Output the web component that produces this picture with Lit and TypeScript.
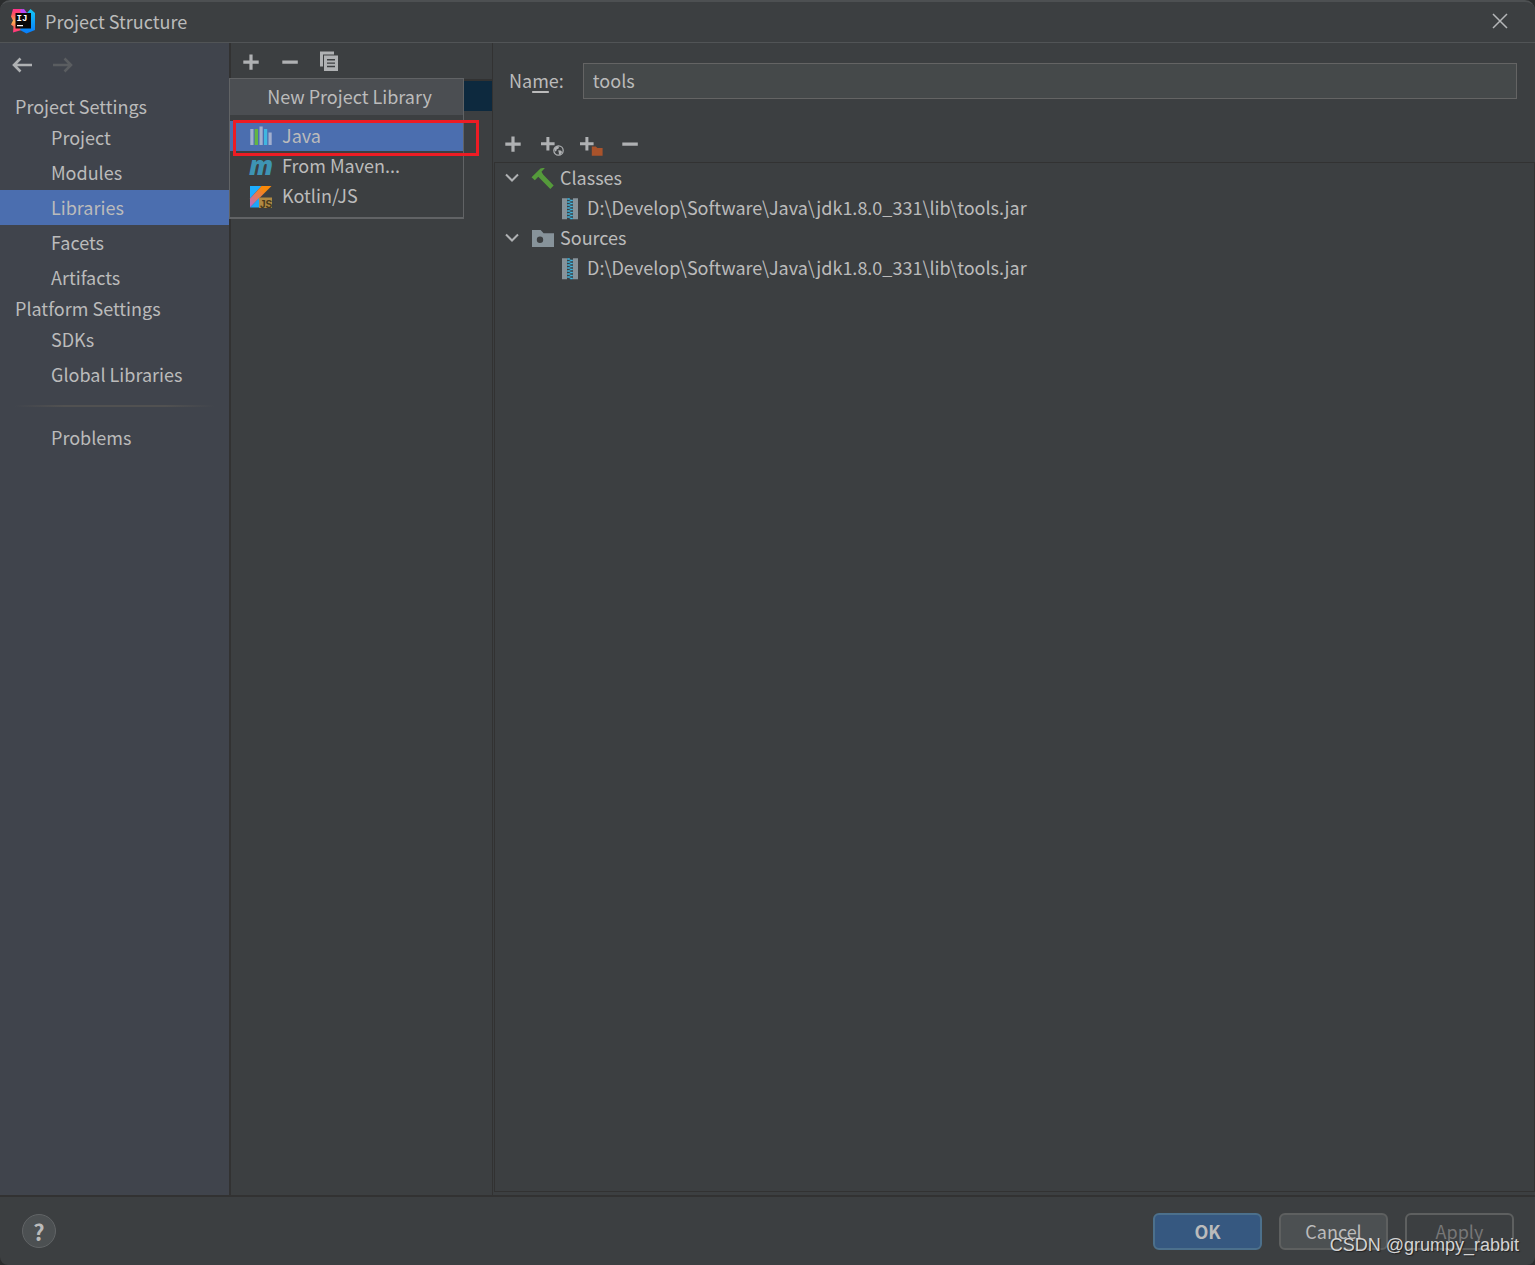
import { LitElement, html, css, svg } from "lit";
import { customElement, state } from "lit/decorators.js";
import { classMap } from "lit/directives/class-map.js";

const icon = (size: number, body: unknown) =>
  html`<svg class="icon" width=${size} height=${size} viewBox="0 0 ${size} ${size}" aria-hidden="true">${body}</svg>`;

const smallPlus = svg`<path d="M1 10.300h5.400V5h3v5.300h5.200v3H9.400v5.300h-3v-5.300H1z" fill="#afb1b3"/>`;

const icons = {
  add: icon(24, svg`<path d="M4.300 10.500h6.100V4.400h3.200v6.100h6.100v3.200h-6.100v6.100h-3.200v-6.100H4.300z" fill="#afb1b3"/>`),
  remove: icon(24, svg`<path d="M4.300 10.500h15.500v3.200H4.300z" fill="#afb1b3"/>`),
  copy: icon(24, svg`<path d="M3 1.500h14v3H6v12H3z" fill="#afb1b3"/>
    <path fill-rule="evenodd" d="M7 5.500h14v15.500H7zM10 9v1.400h8V9zM10 12.400v1.400h8v-1.400zM10 15.800v1.400h8v-1.400z" fill="#afb1b3"/>`),
  addWeb: icon(24, svg`${smallPlus}
    <circle cx="18.500" cy="18.500" r="4.700" fill="none" stroke="#afb1b3" stroke-width="1.200"/>
    <path d="M14 16.500l3-2.600 2 .8-.4 1.800-2 1-.2 1.600-1.400.4zM18.200 18.200l2.600.3 1.400 1.500-1.700 2.300-1.500.4-.2-2z" fill="#afb1b3"/>`),
  addFolder: icon(24, svg`${smallPlus}
    <path d="M12.800 14.500h4l1.600 1.600h5.200v7.600H12.800z" fill="#a9532b"/>`),
  back: icon(24, svg`<path d="M22 12H4M10.500 5.500L4 12l6.500 6.500" fill="none" stroke="#afb1b3" stroke-width="2.600"/>`),
  forward: icon(24, svg`<path d="M3 12h18M14.500 5.500L21 12l-6.500 6.500" fill="none" stroke="#5a5d60" stroke-width="2.600"/>`),
  close: icon(16, svg`<path d="M1 1l14 14M15 1L1 15" fill="none" stroke="#b4b6b8" stroke-width="1.500"/>`),
  chevron: icon(16, svg`<path d="M2 4.500l6 6 6-6" fill="none" stroke="#afb1b3" stroke-width="2"/>`),
  hammer: icon(24, svg`<path d="M.5 11.200L8.700 3.200c1-1 2-1.200 5.200-1.200L10.500 5.800l1.600 2.600L22.700 19.600l-3.400 3.400L8.500 12 7.300 10.800 3.800 14.300z" fill="#559a3b"/>`),
  folder: icon(24, svg`<path fill-rule="evenodd" d="M1 4h8.600l3 3.200H23v13.800H1zM9 10.500a3.200 3.200 0 1 0 0 6.400A3.200 3.200 0 0 0 9 10.500z" fill="#87939a"/>`),
  archive: icon(24, svg`<path d="M4 2.200h5v21H4zM15 2.200h5v21h-5z" fill="#87939a"/>
    <path d="M10.500 2.200v21M13.500 3.700v19.500" fill="none" stroke="#40b6e0" stroke-width="2.600" stroke-dasharray="1.500 1.500"/>
    <path d="M12 3v20" fill="none" stroke="#40b6e0" stroke-width="1.200" stroke-opacity=".4"/>`),
  library: icon(24, svg`<path d="M1.300 4h3.200v16H1.300zM10.500 1.500h3.200V20h-3.200zM19.500 7.500h3.200V20h-3.200z" fill="#a2afce"/>
    <path d="M5.700 4h3.300v16H5.700z" fill="#62b543"/><path d="M15 4h3.200v16H15z" fill="#40b6e0"/>`),
  maven: icon(24, svg`<text x="0" y="20" font-family="Open Sans, sans-serif" font-size="26" font-weight="800" font-style="italic" fill="#3e94b3">m</text>`),
  kotlin: icon(24, svg`<defs>
      <linearGradient id="ko" x1="0" y1="1" x2="1" y2="0"><stop offset="0" stop-color="#b26bd8"/><stop offset=".45" stop-color="#e57a55"/><stop offset=".75" stop-color="#f98909"/></linearGradient>
    </defs>
    <path d="M1 1h11.500L1 13.500z" fill="#1eaeff"/><path d="M12.500 1H22.500L1 22.500V13.500z" fill="url(#ko)"/>
    <path d="M1 22.500L10.500 12.500V22.500z" fill="#1ea5fa"/>
    <path d="M10 12.500h13v10.500H10z" fill="#b08a43"/>
    <text x="11" y="22.500" font-family="Liberation Sans, sans-serif" font-size="10" font-weight="700" fill="#46381c">JS</text>`),
  logo: icon(26, svg`<defs>
      <linearGradient id="lw" x1="0" y1="0" x2="0" y2="1"><stop offset="0" stop-color="#ff318c"/><stop offset=".25" stop-color="#ff5a5a"/><stop offset=".55" stop-color="#fdb052"/><stop offset=".8" stop-color="#ff5a5a"/><stop offset="1" stop-color="#ff2d88"/></linearGradient>
      <linearGradient id="lb" x1="0" y1="0" x2="0" y2="1"><stop offset="0" stop-color="#14c6f5"/><stop offset="1" stop-color="#087cfa"/></linearGradient>
    </defs>
    <path d="M3 1h9l3 4v16L3 24.500l.5-6-2.500-2 2-4-2-4z" fill="url(#lw)"/>
    <path d="M10 1.500L14 1l3 4-6 1z" fill="#b74af7"/>
    <path d="M17 5l3.500-4 4.500 4v17l-8.500 3.500L10 22z" fill="url(#lb)"/>
    <path d="M5.500 5h15.500v15.500H5.500z" fill="#080808"/>
    <text x="6.500" y="13" font-family="Liberation Mono, monospace" font-size="9" font-weight="700" fill="#fff">IJ</text>
    <path d="M7 17h6v1.300H7z" fill="#fff"/>`),
};

const groups = [
  { title: "Project Settings", items: ["Project", "Modules", "Libraries", "Facets", "Artifacts"] },
  { title: "Platform Settings", items: ["SDKs", "Global Libraries"] },
];

const roots = [
  { name: "Classes", glyph: icons.hammer, path: "D:\\Develop\\Software\\Java\\jdk1.8.0_331\\lib\\tools.jar" },
  { name: "Sources", glyph: icons.folder, path: "D:\\Develop\\Software\\Java\\jdk1.8.0_331\\lib\\tools.jar" },
];

const kinds = [
  { name: "Java", glyph: icons.library },
  { name: "From Maven...", glyph: icons.maven },
  { name: "Kotlin/JS", glyph: icons.kotlin },
];

@customElement("app-root")
export class AppRoot extends LitElement {
  @state() private section = "Libraries";
  @state() private kind = "Java";

  static styles = css`
    :host {
      display: block;
      --text: #bbbbbb;
      --line: #323232;
      --accent: #4b6eaf;
      font: 18px/28px "Noto Sans CJK SC", "Noto Sans", sans-serif;
      color: var(--text);
      background: #2b2d2e;
    }
    * { box-sizing: border-box; }
    button, input { font: inherit; color: inherit; margin: 0; padding: 0; border: 0; background: none; }
    .icon { display: block; flex: none; overflow: visible; }
    .window {
      min-height: 100vh;
      display: flex;
      flex-direction: column;
      background: #3c3f41;
      border-top: 2px solid #4d5052;
      border-radius: 10px 10px 8px 8px;
      position: relative;
      overflow: hidden;
    }
    .titlebar {
      display: flex;
      align-items: center;
      gap: 9px;
      height: 41px;
      padding: 0 27px 2px 10px;
      border-bottom: 1px solid #515456;
    }
    h1 { flex: 1; margin: 0; font-size: 18px; font-weight: 400; }
    .body { flex: 1; display: grid; grid-template-columns: 231px 262px 1fr; }
    .sidebar { background: #40444c; border-right: 2px solid var(--line); }
    .history { display: flex; gap: 16px; height: 50px; padding: 10px; }
    .history button { height: 24px; }
    h2 { height: 27px; margin: 0; padding-left: 15px; font-size: 18px; line-height: 27px; font-weight: 400; }
    .link { display: block; height: 35px; padding-left: 51px; line-height: 34px; color: inherit; text-decoration: none; }
    .link.on { background: var(--accent); }
    hr {
      height: 2px;
      margin: 13px 14px;
      border: 0;
      background: linear-gradient(90deg, transparent, #515151 25%, #515151 75%, transparent);
    }
    .list { position: relative; border-right: 1px solid var(--line); }
    .toolbar { display: flex; align-items: center; height: 36px; }
    .toolbar button { width: 39px; height: 36px; display: grid; place-items: center; }
    .list .toolbar { height: 38px; padding-top: 2px; border-bottom: 2px solid var(--line); }
    .selected { height: 30px; background: #0d293e; }
    .menu {
      position: absolute;
      top: 35px;
      left: -2px;
      width: 235px;
      border: 1px solid #616365;
      border-bottom-width: 2px;
      background: #3c3f41;
      z-index: 1;
    }
    .menu-title { height: 36px; padding-left: 6px; line-height: 34px; text-align: center; background: #4b4e52; }
    .menu-items { padding: 6px 0; }
    .menu-items button { display: flex; align-items: center; gap: 9px; width: 100%; height: 30px; padding-left: 19px; }
    .menu-items button.on { background: var(--accent); }
    .menu-items .icon { margin-top: 2px; }
    .menu-items span, .node span { height: 30px; line-height: 28px; }
    .marker {
      position: absolute;
      top: 77px;
      left: 2px;
      width: 246px;
      height: 36px;
      border: 3px solid #ed1c24;
      z-index: 2;
      pointer-events: none;
    }
    .detail { display: flex; flex-direction: column; min-width: 0; padding: 20px 0 3px; }
    .name { display: flex; align-items: center; gap: 19px; padding: 0 18px 0 16px; margin-bottom: 27px; }
    .name label { height: 30px; }
    .name input { flex: 1; min-width: 0; height: 36px; padding: 0 9px 3px; background: #45494a; border: 1px solid #646464; outline: 0; }
    u { text-underline-offset: 3px; text-decoration-thickness: 2px; }
    .tree { flex: 1; margin-left: 1px; border: 1px solid var(--line); }
    ul { list-style: none; margin: 0; padding: 0; }
    .node { display: flex; align-items: center; height: 30px; gap: 5px; padding-left: 9px; }
    .node button { width: 22px; }
    .leaf { padding-left: 63px; }
    .footer { display: flex; align-items: center; gap: 17px; height: 70px; padding: 0 21px 0 22px; border-top: 2px solid var(--line); }
    .help { width: 34px; height: 34px; margin-right: auto; border-radius: 50%; border: 1px solid #616466; background: #4c5052; font-size: 22px; font-weight: 700; line-height: 32px; }
    .action { width: 109px; height: 37px; padding-bottom: 1px; border: 2px solid #5e6060; border-radius: 6px; background: #4c5052; line-height: 32px; }
    .action.primary { background: #365880; border-color: #4c708c; font-weight: 700; }
    .action:disabled { background: none; color: #777777; }
    .watermark {
      position: absolute;
      right: 16px;
      bottom: 5px;
      font: 18px/30px "Liberation Sans", Arial, sans-serif;
      color: #d4d4d4;
      text-shadow: 1px 1px 1px #222222;
      pointer-events: none;
    }
  `;

  private link(name: string) {
    return html`<a href="#" class=${classMap({ link: true, on: name === this.section })}
      @click=${(e: Event) => { e.preventDefault(); this.section = name; }}>${name}</a>`;
  }

  render() {
    return html`
      <div class="window">
        <header class="titlebar">
          ${icons.logo}
          <h1>Project Structure</h1>
          <button aria-label="Close">${icons.close}</button>
        </header>
        <main class="body">
          <nav class="sidebar">
            <div class="history">
              <button aria-label="Back">${icons.back}</button>
              <button aria-label="Forward" disabled>${icons.forward}</button>
            </div>
            ${groups.map((g) => html`<h2>${g.title}</h2>${g.items.map((i) => this.link(i))}`)}
            <hr />
            ${this.link("Problems")}
          </nav>
          <section class="list">
            <div class="toolbar">
              <button aria-label="Add library">${icons.add}</button>
              <button aria-label="Remove library">${icons.remove}</button>
              <button aria-label="Copy library">${icons.copy}</button>
            </div>
            <div class="selected"></div>
            <div class="menu">
              <div class="menu-title">New Project Library</div>
              <div class="menu-items">
                ${kinds.map((k) => html`<button class=${classMap({ on: k.name === this.kind })}
                  @click=${() => { this.kind = k.name; }}>${k.glyph}<span>${k.name}</span></button>`)}
              </div>
            </div>
            <div class="marker"></div>
          </section>
          <section class="detail">
            <div class="name">
              <label for="name">Na<u>m</u>e:</label>
              <input id="name" type="text" value="tools" />
            </div>
            <div class="toolbar">
              <button aria-label="Add">${icons.add}</button>
              <button aria-label="Add from URL">${icons.addWeb}</button>
              <button aria-label="Add folder">${icons.addFolder}</button>
              <button aria-label="Remove">${icons.remove}</button>
            </div>
            <div class="tree">
              <ul>
                ${roots.map((r) => html`<li>
                  <div class="node"><button aria-label="Collapse ${r.name}">${icons.chevron}</button>${r.glyph}<span>${r.name}</span></div>
                  <ul><li class="node leaf">${icons.archive}<span>${r.path}</span></li></ul>
                </li>`)}
              </ul>
            </div>
          </section>
        </main>
        <footer class="footer">
          <button class="help" aria-label="Help">?</button>
          <button class="action primary">OK</button>
          <button class="action">Cancel</button>
          <button class="action" disabled>Apply</button>
        </footer>
        <div class="watermark">CSDN @grumpy_rabbit</div>
      </div>
    `;
  }
}
